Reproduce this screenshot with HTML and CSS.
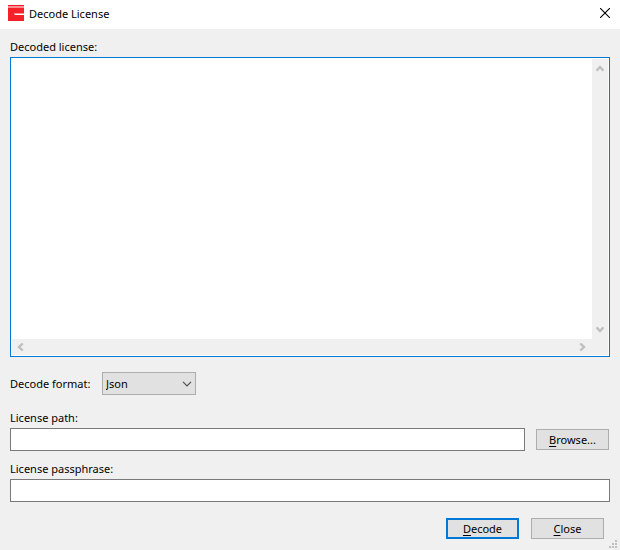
FILE: index.html
```html
<!DOCTYPE html>
<html lang="en">
<head>
<meta charset="utf-8">
<title>Decode License</title>
<link rel="stylesheet" href="styles.css">
</head>
<body>
<div class="dialog">
  <header class="titlebar">
    <svg class="logo" width="16" height="16" viewBox="0 0 16 16" shape-rendering="crispEdges" aria-hidden="true">
      <rect width="16" height="16" fill="#f62128"/>
      <rect y="1" width="16" height="2" fill="#fa8f93"/>
      <rect x="6" y="8" width="1" height="2" fill="#fa8f93"/>
      <rect x="7" y="8" width="9" height="1" fill="#fa8f93"/>
      <rect x="7" y="9" width="9" height="1" fill="#fff"/>
    </svg>
    <h1 class="title">Decode License</h1>
    <button class="close" type="button" aria-label="Close window">
      <svg width="10" height="10" viewBox="0 0 10 10"><path d="M0 0L10 10M10 0L0 10" stroke="#000" stroke-width="1.1"/></svg>
    </button>
  </header>
  <form class="content">
    <label class="label" for="decoded">Decoded license:</label>
    <div class="editor">
      <textarea id="decoded" class="editor-text"></textarea>
      <div class="bar bar-v">
        <svg width="8" height="7" viewBox="0 0 8 7"><path d="M.5 5.7L4 2L7.5 5.7" /></svg>
        <svg width="8" height="7" viewBox="0 0 8 7"><path d="M.5 1.3L4 5L7.5 1.3" /></svg>
      </div>
      <div class="bar bar-h">
        <svg width="7" height="8" viewBox="0 0 7 8"><path d="M5.7 .5L2 4L5.7 7.5" /></svg>
        <svg width="7" height="8" viewBox="0 0 7 8"><path d="M1.3 .5L5 4L1.3 7.5" /></svg>
      </div>
    </div>
    <div class="format">
      <label class="label format-label" for="format">Decode format:</label>
      <div class="select-wrap">
        <select id="format" class="select"><option>Json</option></select>
        <svg class="chevron" width="10" height="6" viewBox="0 0 10 6"><path d="M1 .8L5 4.8L9 .8" fill="none" stroke="#505050" stroke-width="1.2"/></svg>
      </div>
    </div>
    <label class="label" for="path">License path:</label>
    <div class="path-row">
      <input id="path" class="field" type="text">
      <button class="button" type="button"><u>B</u>rowse...</button>
    </div>
    <label class="label passphrase-label" for="passphrase">License passphrase:</label>
    <input id="passphrase" class="field" type="text">
    <div class="actions">
      <button class="button primary" type="button"><u>D</u>ecode</button>
      <button class="button" type="button"><u>C</u>lose</button>
    </div>
  </form>
  <svg class="grip" width="8" height="8" viewBox="0 0 8 8" shape-rendering="crispEdges" fill="#bfbfbf" aria-hidden="true">
    <path d="M6 0h2v2h-2zM3 3h2v2h-2zM6 3h2v2h-2zM0 6h2v2h-2zM3 6h2v2h-2zM6 6h2v2h-2z"/>
  </svg>
</div>
</body>
</html>
```

FILE: styles.css
```css
* {
  box-sizing: border-box;
}

body {
  margin: 0;
  background: #f0f0f0;
  color: #000;
  font: 11px/20px "Noto Sans", "Open Sans", sans-serif;
}

button,
input,
select,
textarea {
  margin: 0;
  font: inherit;
  color: inherit;
  border-radius: 0;
  outline: none;
}

.dialog {
  position: relative;
  display: flex;
  flex-direction: column;
  min-height: 100vh;
}

.titlebar {
  display: flex;
  align-items: flex-start;
  height: 29px;
  padding: 4px 10px 0 8px;
  background: #fff;
}

.logo {
  margin-top: 1px;
}

.title {
  flex: 1;
  margin: 0 0 0 5px;
  font-size: 11px;
  font-weight: 400;
}

.close {
  display: flex;
  margin-top: 4px;
  padding: 0;
  border: 0;
  background: none;
}

.content {
  flex: 1;
  display: flex;
  flex-direction: column;
  padding: 8px 10px 11px;
}

.label {
  display: block;
}

.editor {
  flex: 1;
  display: grid;
  grid-template-columns: 1fr 16px;
  grid-template-rows: 1fr 16px;
  padding: 1px;
  border: 1px solid #0078d7;
  background: #fff;
}

.editor-text {
  width: 100%;
  height: 100%;
  padding: 2px;
  border: 0;
  resize: none;
  background: #fff;
}

.bar {
  display: flex;
  align-items: center;
  justify-content: space-between;
  background: #f0f0f0;
}

.bar path {
  fill: none;
  stroke: #bfbfbf;
  stroke-width: 2.4;
}

.bar-v {
  flex-direction: column;
  padding: 6px 0;
}

.bar-h {
  grid-column: 1 / 3;
  padding: 0 22px 0 5px;
}

.format {
  display: flex;
  align-items: center;
  margin: 15px 0 13px;
}

.format-label {
  width: 92px;
}

.select-wrap {
  position: relative;
}

.select {
  display: block;
  width: 94px;
  height: 23px;
  padding: 0 3px;
  border: 1px solid #adadad;
  background: #e1e1e1;
  appearance: none;
}

.chevron {
  position: absolute;
  right: 4px;
  top: 9px;
  pointer-events: none;
}

.path-row {
  display: flex;
  align-items: center;
  gap: 11px;
  padding-right: 1px;
}

.field {
  flex: 1 0 auto;
  min-width: 0;
  height: 23px;
  padding: 0 3px;
  border: 1px solid #7a7a7a;
  background: #fff;
}

.content > .field {
  flex: none;
}

.passphrase-label {
  margin-top: 8px;
}

.button {
  width: 73px;
  height: 21px;
  padding: 0;
  border: 1px solid #adadad;
  background: #e1e1e1;
  line-height: 19px;
}

.button u {
  text-underline-offset: 2px;
}

.primary {
  border: 2px solid #0078d7;
  line-height: 17px;
}

.actions {
  display: flex;
  justify-content: flex-end;
  gap: 12px;
  margin-top: 16px;
  padding-right: 6px;
}

.grip {
  position: absolute;
  right: 3px;
  bottom: 2px;
}
```
